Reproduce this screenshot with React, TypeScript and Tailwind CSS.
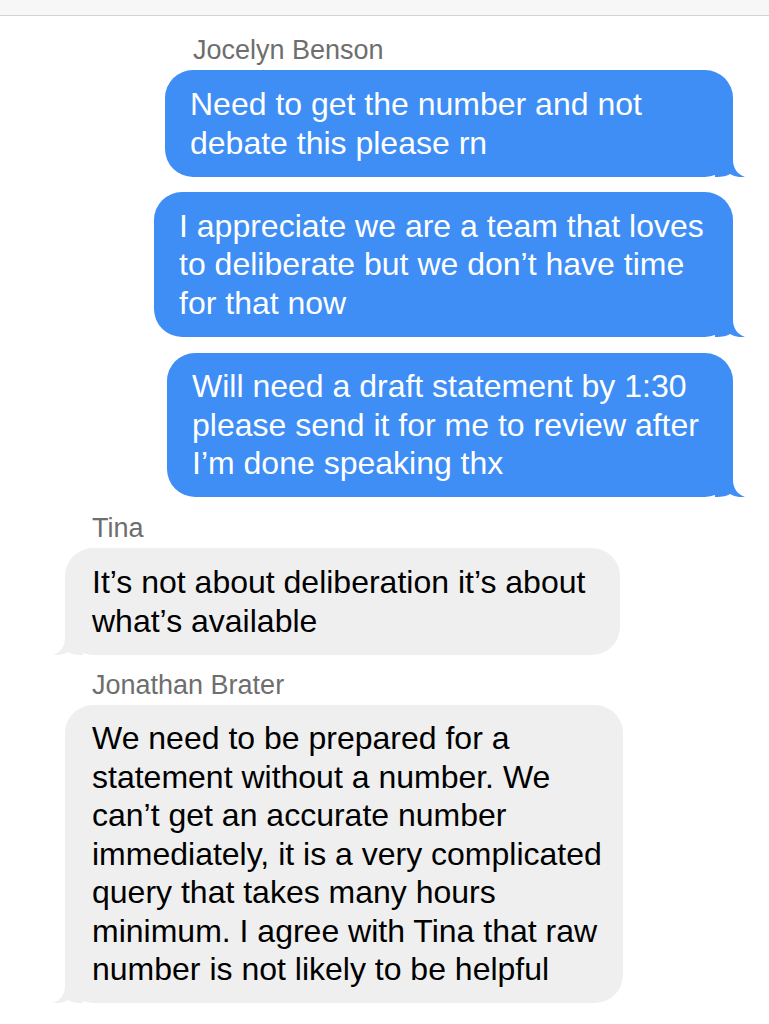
import React from "react";

type Msg = {
  id: number;
  sender?: string;
  mine: boolean;
  lines: string[];
  width: string;
  box: string;
};

const messages: Msg[] = [
  {
    id: 1,
    sender: "Jocelyn Benson",
    mine: true,
    lines: ["Need to get the number and not", "debate this please rn"],
    width: "w-[568px]",
    box: "mt-0 py-[15px]",
  },
  {
    id: 2,
    mine: true,
    lines: [
      "I appreciate we are a team that loves",
      "to deliberate but we don\u2019t have time",
      "for that now",
    ],
    width: "w-[579px]",
    box: "mt-[15px] py-[14.5px]",
  },
  {
    id: 3,
    mine: true,
    lines: [
      "Will need a draft statement by 1:30",
      "please send it for me to review after",
      "I\u2019m done speaking thx",
    ],
    width: "w-[566px]",
    box: "mt-[16px] py-[14.5px]",
  },
  {
    id: 4,
    sender: "Tina",
    mine: false,
    lines: ["It\u2019s not about deliberation it\u2019s about", "what\u2019s available"],
    width: "w-[555px]",
    box: "mt-[17px] py-[15px]",
  },
  {
    id: 5,
    sender: "Jonathan Brater",
    mine: false,
    lines: [
      "We need to be prepared for a",
      "statement without a number. We",
      "can\u2019t get an accurate number",
      "immediately, it is a very complicated",
      "query that takes many hours",
      "minimum. I agree with Tina that raw",
      "number is not likely to be helpful",
    ],
    width: "w-[558px]",
    box: "mt-[16px] py-[14px]",
  },
];

const Tail = ({ color, flip }: { color: string; flip?: boolean }) => (
  <svg
    viewBox="0 0 30 30"
    className={`absolute bottom-0 w-[30px] h-[30px] ${
      flip ? "left-[-12px] -scale-x-100" : "right-[-12px]"
    }`}
  >
    <path
      d="M18 0 L18 13 C18 21 22 27 30 30 C24 30.5 19 29.5 15 27 C12 29 8 30 0 30 L0 0 Z"
      fill={color}
    />
  </svg>
);

const Bubble = ({ msg }: { msg: Msg }) => {
  const [margin, pad] = msg.box.split(" ");
  return (
    <div className={margin}>
      {msg.sender && (
        <div
          className={`text-[27px] leading-[28px] text-[#6e6e6e] mb-[6px] ${
            msg.mine ? "pl-[193px]" : "pl-[92px]"
          }`}
        >
          {msg.sender}
        </div>
      )}
      <div
        className={`relative ${msg.width} ${pad} rounded-[28px] whitespace-nowrap text-[32px] leading-[38.5px] ${
          msg.mine
            ? "ml-auto mr-[36px] pl-[25px] bg-[#3e8ef6] text-white"
            : "ml-[65px] pl-[27px] bg-[#efefef] text-black"
        }`}
      >
        {msg.lines.map((l, i) => (
          <div key={i}>{l}</div>
        ))}
        {msg.mine ? <Tail color="#3e8ef6" /> : <Tail color="#efefef" flip />}
      </div>
    </div>
  );
};

export default function App() {
  return (
    <div
      className="w-[769px] h-[1024px] overflow-hidden bg-white"
      style={{ fontFamily: '"Liberation Sans", Arial, sans-serif' }}
    >
      <div className="h-4 bg-[#f7f7f7] border-b border-[#d4d4d4]" />
      <div className="flex flex-col pt-[20px]">
        {messages.map((m) => (
          <Bubble key={m.id} msg={m} />
        ))}
      </div>
    </div>
  );
}
